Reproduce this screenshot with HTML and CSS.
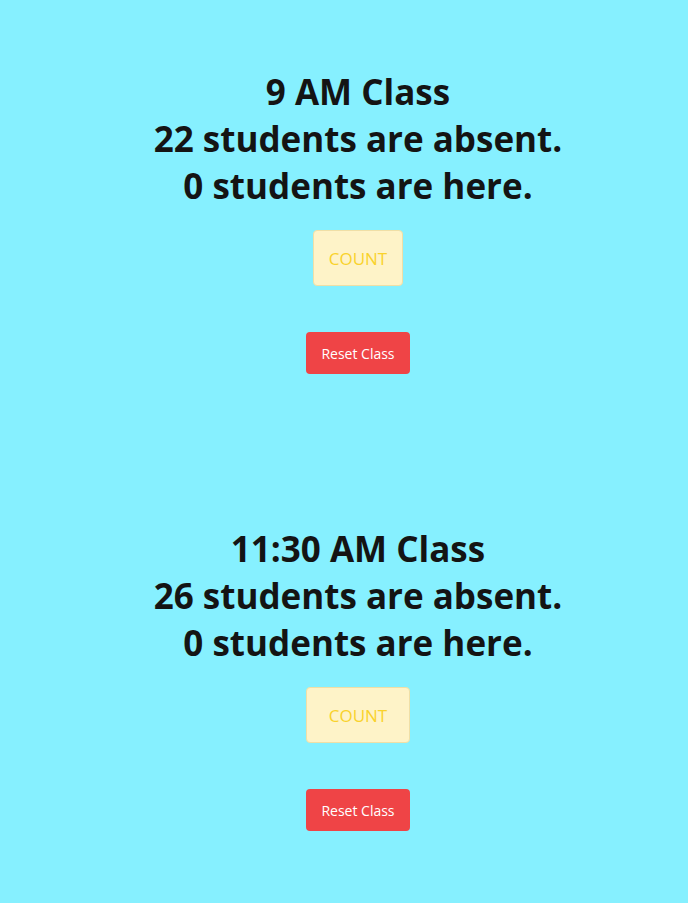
FILE: index.html
```html
<!DOCTYPE html>
<html lang="en">
<head>
<meta charset="utf-8">
<title>Attendance</title>
<link rel="stylesheet" href="styles.css">
</head>
<body>
<main class="page">
  <section class="klass">
    <h1 class="title">9 AM Class<br>22 students are absent.<br>0 students are here.</h1>
    <button class="count count-a">COUNT</button>
    <button class="reset">Reset Class</button>
  </section>
  <section class="klass">
    <h1 class="title">11:30 AM Class<br>26 students are absent.<br>0 students are here.</h1>
    <button class="count count-b">COUNT</button>
    <button class="reset">Reset Class</button>
  </section>
</main>
</body>
</html>
```
FILE: styles.css
```css
html, body {
  margin: 0;
  padding: 0;
  background: #86f0ff;
}
body {
  font-family: "Open Sans", "Noto Sans", sans-serif;
  color: #111;
}
.page {
  display: flex;
  flex-direction: column;
  align-items: center;
  padding-top: 68px;
  padding-left: 28px;
  gap: 151px;
}
.klass {
  display: flex;
  flex-direction: column;
  align-items: center;
}
.title {
  margin: 0;
  font-size: 35px;
  line-height: 47px;
  font-weight: 700;
  text-align: center;
  color: #141414;
}
.count {
  margin-top: 21px;
  height: 56px;
  background: #fef3c8;
  color: #f9d22c;
  border: 1px solid #f0dfa6;
  border-radius: 4px;
  font-family: inherit;
  font-size: 17px;
  padding: 0;
}
.count-a { width: 90px; }
.count-b { width: 104px; }
.reset {
  margin-top: 46px;
  width: 104px;
  height: 42px;
  background: #ef4446;
  color: #fff;
  border: none;
  border-radius: 4px;
  font-family: inherit;
  font-size: 14px;
  padding: 0;
}
```
